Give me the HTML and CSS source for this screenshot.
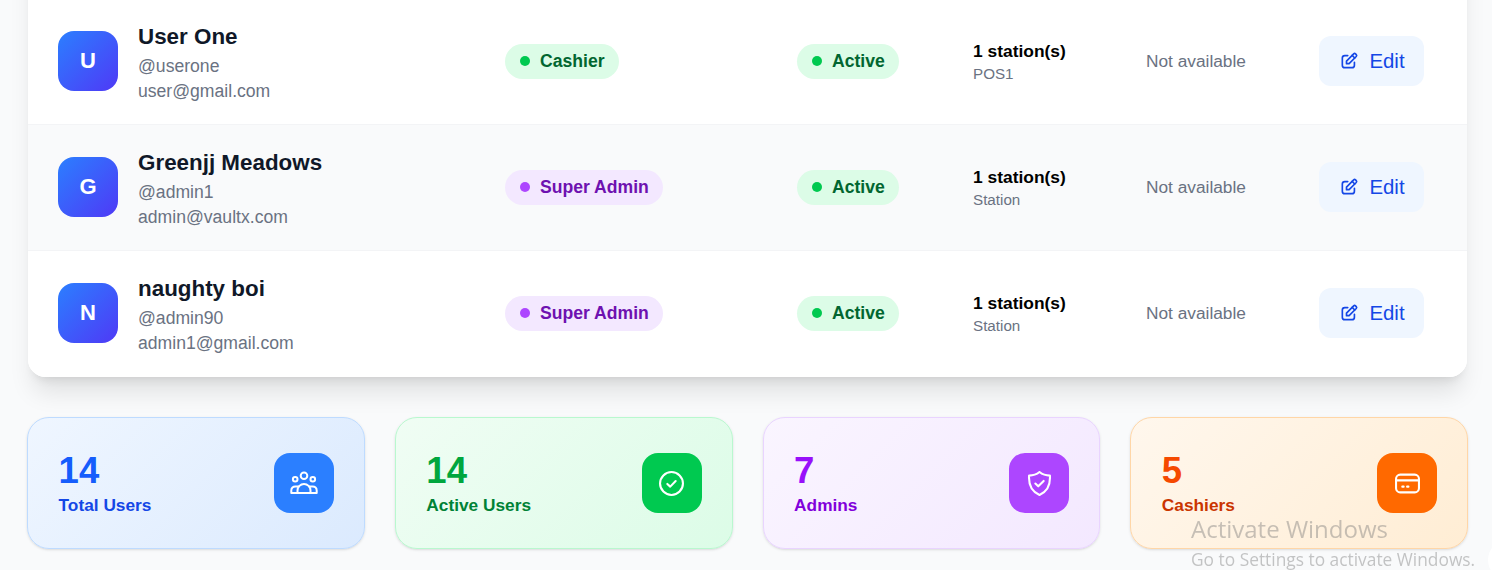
FILE: index.html
```html
<!DOCTYPE html>
<html lang="en">
<head>
<meta charset="utf-8">
<title>Users</title>
<link rel="stylesheet" href="styles.css">
</head>
<body>
<main class="page">
  <section class="table-card">
    <div class="row">
      <div class="user">
        <div class="avatar">U</div>
        <div class="user-text">
          <div class="name">User One</div>
          <div class="meta">@userone</div>
          <div class="meta">user@gmail.com</div>
        </div>
      </div>
      <div><span class="pill pill-green"><i class="dot dot-green"></i>Cashier</span></div>
      <div><span class="pill pill-green"><i class="dot dot-green"></i>Active</span></div>
      <div class="stations"><div class="st-count">1 station(s)</div><div class="st-name">POS1</div></div>
      <div class="login">Not available</div>
      <button class="edit"><svg class="edit-icon" viewBox="0 0 24 24"><path d="M10.5 5.5H7a3 3 0 0 0-3 3V17a3 3 0 0 0 3 3h8.5a3 3 0 0 0 3-3v-3.5"/><path d="M9 15.2v-3.1l8.6-8.6a1.6 1.6 0 0 1 2.2 0l.9.9a1.6 1.6 0 0 1 0 2.2L12.1 15.2z"/><path d="M15.8 5.3l3.1 3.1"/></svg>Edit</button>
    </div>
    <div class="row row-alt">
      <div class="user">
        <div class="avatar">G</div>
        <div class="user-text">
          <div class="name">Greenjj Meadows</div>
          <div class="meta">@admin1</div>
          <div class="meta">admin@vaultx.com</div>
        </div>
      </div>
      <div><span class="pill pill-purple"><i class="dot dot-purple"></i>Super Admin</span></div>
      <div><span class="pill pill-green"><i class="dot dot-green"></i>Active</span></div>
      <div class="stations"><div class="st-count">1 station(s)</div><div class="st-name">Station</div></div>
      <div class="login">Not available</div>
      <button class="edit"><svg class="edit-icon" viewBox="0 0 24 24"><path d="M10.5 5.5H7a3 3 0 0 0-3 3V17a3 3 0 0 0 3 3h8.5a3 3 0 0 0 3-3v-3.5"/><path d="M9 15.2v-3.1l8.6-8.6a1.6 1.6 0 0 1 2.2 0l.9.9a1.6 1.6 0 0 1 0 2.2L12.1 15.2z"/><path d="M15.8 5.3l3.1 3.1"/></svg>Edit</button>
    </div>
    <div class="row row-last">
      <div class="user">
        <div class="avatar">N</div>
        <div class="user-text">
          <div class="name">naughty boi</div>
          <div class="meta">@admin90</div>
          <div class="meta">admin1@gmail.com</div>
        </div>
      </div>
      <div><span class="pill pill-purple"><i class="dot dot-purple"></i>Super Admin</span></div>
      <div><span class="pill pill-green"><i class="dot dot-green"></i>Active</span></div>
      <div class="stations"><div class="st-count">1 station(s)</div><div class="st-name">Station</div></div>
      <div class="login">Not available</div>
      <button class="edit"><svg class="edit-icon" viewBox="0 0 24 24"><path d="M10.5 5.5H7a3 3 0 0 0-3 3V17a3 3 0 0 0 3 3h8.5a3 3 0 0 0 3-3v-3.5"/><path d="M9 15.2v-3.1l8.6-8.6a1.6 1.6 0 0 1 2.2 0l.9.9a1.6 1.6 0 0 1 0 2.2L12.1 15.2z"/><path d="M15.8 5.3l3.1 3.1"/></svg>Edit</button>
    </div>
  </section>

  <section class="stats">
    <article class="stat stat-blue">
      <div><div class="stat-num">14</div><div class="stat-label">Total Users</div></div>
      <div class="stat-icon"><svg class="icon-wide" viewBox="0 0 28 28"><circle cx="14" cy="6.800" r="3.300"/><circle cx="5.200" cy="10.200" r="2.300"/><circle cx="22.800" cy="10.200" r="2.300"/><path d="M7.500 24v-2.500a6.500 6.500 0 0 1 13 0V24z"/><path d="M7.500 24H1.300v-2.600a4 4 0 0 1 4-4h3.400"/><path d="M20.500 24h6.200v-2.600a4 4 0 0 0-4-4h-3.400"/></svg></div>
    </article>
    <article class="stat stat-green">
      <div><div class="stat-num">14</div><div class="stat-label">Active Users</div></div>
      <div class="stat-icon"><svg viewBox="0 0 24 24"><circle cx="12" cy="12" r="11"/><path d="M8 12.400l2.800 2.600L16 9.600"/></svg></div>
    </article>
    <article class="stat stat-purple">
      <div><div class="stat-num">7</div><div class="stat-label">Admins</div></div>
      <div class="stat-icon"><svg viewBox="0 0 24 24"><path d="M12 1c2.800 2.300 6 3.400 10 3.400.6 9-2.800 15.600-10 18.600C4.800 20 1.400 13.400 2 4.400 6 4.400 9.200 3.300 12 1z"/><path d="M8 12l2.800 2.700L16 9.500"/></svg></div>
    </article>
    <article class="stat stat-orange">
      <div><div class="stat-num">5</div><div class="stat-label">Cashiers</div></div>
      <div class="stat-icon"><svg viewBox="0 0 24 24"><rect x="1" y="3.500" width="22" height="17" rx="4"/><path d="M1 9h22"/><path d="M7 15h1.300M11.600 15h1.300"/></svg></div>
    </article>
  </section>
</main>

<aside class="watermark">
  <div class="wm-title">Activate Windows</div>
  <div class="wm-sub">Go to Settings to activate Windows.</div>
</aside>
<div class="corner-dot"></div>
</body>
</html>
```
FILE: styles.css
```css
* { box-sizing: border-box; }

html, body {
  height: 100%;
}

body {
  margin: 0;
  overflow: hidden;
  background: #f9fafb;
  font-family: "Liberation Sans", Arial, sans-serif;
  font-size: 17.6px;
  color: #101828;
}

.page {
  width: 1441px;
  margin: -61.400px 0 0 27px;
}

.table-card {
  margin: 0 1px;
  padding-top: 60px;
  background: #fff;
  border-radius: 17.6px;
  box-shadow: 0 20px 25px -5px rgba(0, 0, 0, .1), 0 8px 10px -6px rgba(0, 0, 0, .1);
  overflow: hidden;
}

.row {
  display: grid;
  grid-template-columns: 477px 292px 176px 173px 173px 105px;
  align-items: center;
  height: 126px;
  border-bottom: 1px solid #f3f4f6;
  background: #fff;
}

.row-alt { background: #f9fafb; }
.row-last { border-bottom-color: transparent; }

.user {
  display: flex;
  align-items: center;
  gap: 20px;
  padding-left: 30px;
}

.avatar {
  display: flex;
  align-items: center;
  justify-content: center;
  flex: none;
  width: 60px;
  height: 60px;
  border-radius: 16px;
  background: linear-gradient(135deg, #2b7fff, #4f39f6);
  color: #fff;
  font-size: 22px;
  font-weight: 700;
}

.user-text {
  padding-top: 3px;
}

.name {
  font-size: 22.4px;
  font-weight: 700;
  line-height: 30px;
  margin-bottom: 2px;
  color: #101828;
}

.meta {
  font-size: 17.6px;
  line-height: 25px;
  color: #6a7282;
}

.pill {
  display: inline-flex;
  align-items: center;
  gap: 10px;
  height: 35px;
  padding: 0 14.500px 0 15px;
  border-radius: 999px;
  font-size: 17.6px;
  font-weight: 700;
}

.pill-green { background: #dcfce7; color: #016630; }
.pill-purple { background: #f3e8ff; color: #6e11b0; }

.dot {
  width: 10px;
  height: 10px;
  border-radius: 50%;
}

.dot-green { background: #00c950; }
.dot-purple { background: #ad46ff; }

.st-count {
  font-size: 17.4px;
  font-weight: 700;
  line-height: 24px;
  color: #000;
}

.st-name {
  margin-top: 1px;
  font-size: 15.2px;
  line-height: 20px;
  color: #6a7282;
}

.login {
  font-size: 17.3px;
  color: #6a7282;
}

.edit {
  display: flex;
  align-items: center;
  justify-content: center;
  gap: 10px;
  width: 105px;
  height: 50px;
  padding: 0 0 0 1px;
  border: 0;
  border-radius: 12px;
  background: #eff6ff;
  color: #1447e6;
  font-family: inherit;
  font-size: 20.4px;
}

.edit-icon {
  width: 20px;
  height: 20px;
  fill: none;
  stroke: currentColor;
  stroke-width: 2;
  stroke-linecap: round;
  stroke-linejoin: round;
}

.stats {
  display: grid;
  grid-template-columns: repeat(4, 1fr);
  gap: 30px;
  margin-top: 40.400px;
}

.stat {
  display: flex;
  align-items: center;
  justify-content: space-between;
  height: 132px;
  padding: 0 30px 0 30.600px;
  border: 1px solid;
  border-radius: 22px;
  box-shadow: 0 1px 3px rgba(0, 0, 0, .1), 0 1px 2px -1px rgba(0, 0, 0, .1);
}

.stat-num {
  padding-top: 1px;
  font-size: 36.500px;
  font-weight: 700;
  line-height: 44px;
}

.stat-label {
  font-size: 17.3px;
  font-weight: 700;
  line-height: 25px;
}

.stat-icon {
  display: flex;
  align-items: center;
  justify-content: center;
  width: 60px;
  height: 60px;
  border-radius: 16px;
}

.stat-icon svg {
  width: 25px;
  height: 25px;
  fill: none;
  stroke: #fff;
  stroke-width: 2;
  stroke-linecap: round;
  stroke-linejoin: round;
}

.stat-icon .icon-wide {
  width: 28px;
  height: 28px;
}

.stat-blue { background: linear-gradient(135deg, #eff6ff, #dbeafe); border-color: #bedbff; }
.stat-blue .stat-num { color: #155dfc; }
.stat-blue .stat-label { color: #1447e6; }
.stat-blue .stat-icon { background: #2b7fff; }

.stat-green { background: linear-gradient(135deg, #f0fdf4, #dcfce7); border-color: #b9f8cf; }
.stat-green .stat-num { color: #00a63e; }
.stat-green .stat-label { color: #008236; }
.stat-green .stat-icon { background: #00c950; }

.stat-purple { background: linear-gradient(135deg, #faf5ff, #f3e8ff); border-color: #e9d4ff; }
.stat-purple .stat-num { color: #9810fa; }
.stat-purple .stat-label { color: #8200db; }
.stat-purple .stat-icon { background: #ad46ff; }

.stat-orange { background: linear-gradient(135deg, #fff7ed, #ffedd4); border-color: #ffd6a7; }
.stat-orange .stat-num { color: #f54900; }
.stat-orange .stat-label { color: #ca3500; }
.stat-orange .stat-icon { background: #ff6900; }

.watermark {
  position: fixed;
  left: 1191px;
  top: 513px;
  font-family: "Open Sans", sans-serif;
  color: rgba(120, 120, 120, .42);
  white-space: nowrap;
  pointer-events: none;
}

.wm-title {
  font-size: 24px;
  line-height: 32px;
}

.wm-sub {
  margin-top: 2px;
  font-size: 17.350px;
  line-height: 24px;
}

.corner-dot {
  position: fixed;
  left: 1488px;
  top: 540px;
  width: 40px;
  height: 40px;
  border-radius: 50%;
  background: #fff;
}
```
